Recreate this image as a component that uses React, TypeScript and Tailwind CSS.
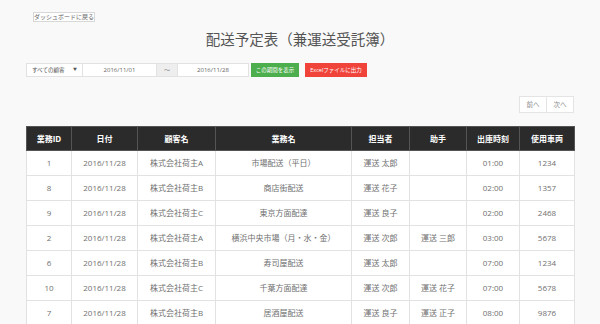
import React from 'react';

const rows = [
  { id: '1', date: '2016/11/28', client: '株式会社荷主A', job: '市場配送（平日）', tanto: '運送 太郎', helper: '', time: '01:00', car: '1234' },
  { id: '8', date: '2016/11/28', client: '株式会社荷主B', job: '商店街配送', tanto: '運送 花子', helper: '', time: '02:00', car: '1357' },
  { id: '9', date: '2016/11/28', client: '株式会社荷主C', job: '東京方面配達', tanto: '運送 良子', helper: '', time: '02:00', car: '2468' },
  { id: '2', date: '2016/11/28', client: '株式会社荷主A', job: '横浜中央市場（月・水・金）', tanto: '運送 次郎', helper: '運送 三郎', time: '03:00', car: '5678' },
  { id: '6', date: '2016/11/28', client: '株式会社荷主B', job: '寿司屋配送', tanto: '運送 太郎', helper: '', time: '07:00', car: '1234' },
  { id: '10', date: '2016/11/28', client: '株式会社荷主C', job: '千葉方面配達', tanto: '運送 次郎', helper: '運送 花子', time: '07:00', car: '5678' },
  { id: '7', date: '2016/11/28', client: '株式会社荷主B', job: '居酒屋配送', tanto: '運送 良子', helper: '運送 正子', time: '08:00', car: '9876' },
];

const headers = ['業務ID', '日付', '顧客名', '業務名', '担当者', '助手', '出庫時刻', '使用車両'];
const widths = ['w-[45px]', 'w-[66px]', 'w-[78px]', 'w-[136px]', 'w-[58px]', 'w-[57px]', 'w-[53px]', 'w-[55px]'];

export default function App() {
  return (
    <div className="w-[600px] h-[324px] overflow-hidden bg-[#f9f9f9] text-[#555] font-['Open_Sans','Noto_Sans_CJK_JP',sans-serif]">
      <div className="pl-[33px] pt-[12px]">
        <button className="h-[10px] w-[62px] border border-[#d8d8d8] bg-white text-[6px] leading-[8px] text-[#666] flex items-center justify-center">
          ダッシュボードに戻る
        </button>
      </div>

      <h1 className="text-center text-[14.5px] leading-[18px] text-[#555] mt-[9px]">
        配送予定表（兼運送受託簿）
      </h1>

      <div className="flex items-center mt-[14px] pl-[26px] h-[14px]">
        <div className="w-[57px] h-[14px] bg-white border border-[#e2e2e2] flex items-center justify-between px-[5px] text-[5.5px] text-[#555]">
          <span>すべての顧客</span>
          <span className="text-[4px]">▼</span>
        </div>
        <div className="w-[74px] h-[14px] bg-white border border-[#e2e2e2] border-l-0 flex items-center justify-center text-[6px] text-[#666]">
          2016/11/01
        </div>
        <div className="w-[20px] h-[14px] bg-[#eee] border-y border-[#e2e2e2] flex items-center justify-center text-[6px] text-[#888]">
          〜
        </div>
        <div className="w-[72px] h-[14px] bg-white border border-[#e2e2e2] flex items-center justify-center text-[6px] text-[#666]">
          2016/11/28
        </div>
        <button className="ml-[2px] w-[48px] h-[14px] bg-[#4cae4c] text-white text-[5.5px] flex items-center justify-center">
          この期間を表示
        </button>
        <button className="ml-[6px] w-[62px] h-[14px] bg-[#f0433a] text-white text-[5.5px] flex items-center justify-center">
          Excelファイルに出力
        </button>
      </div>

      <div className="flex justify-end pr-[26px] mt-[19px]">
        <div className="flex h-[17px] border border-[#e4e4e4] bg-white text-[6.5px] text-[#888]">
          <span className="w-[27px] flex items-center justify-center border-r border-[#e4e4e4]">前へ</span>
          <span className="w-[26px] flex items-center justify-center">次へ</span>
        </div>
      </div>

      <div className="pl-[26px] mt-[13px]">
        <table className="table-fixed w-[548px] border-collapse bg-white text-[8px]">
          <thead>
            <tr className="h-[24px] bg-[#2b2b2b] text-white">
              {headers.map((h, i) => (
                <th key={h} className={`${widths[i]} font-bold border border-[#555] text-center`}>
                  {h}
                </th>
              ))}
            </tr>
          </thead>
          <tbody>
            {rows.map((r) => (
              <tr key={r.id} className="h-[25px] text-[#707070]">
                <td className="border border-[#e2e2e2] text-center">{r.id}</td>
                <td className="border border-[#e2e2e2] text-center">{r.date}</td>
                <td className="border border-[#e2e2e2] text-center">{r.client}</td>
                <td className="border border-[#e2e2e2] text-center">{r.job}</td>
                <td className="border border-[#e2e2e2] text-center">{r.tanto}</td>
                <td className="border border-[#e2e2e2] text-center">{r.helper}</td>
                <td className="border border-[#e2e2e2] text-center">{r.time}</td>
                <td className="border border-[#e2e2e2] text-center">{r.car}</td>
              </tr>
            ))}
          </tbody>
        </table>
      </div>
    </div>
  );
}
